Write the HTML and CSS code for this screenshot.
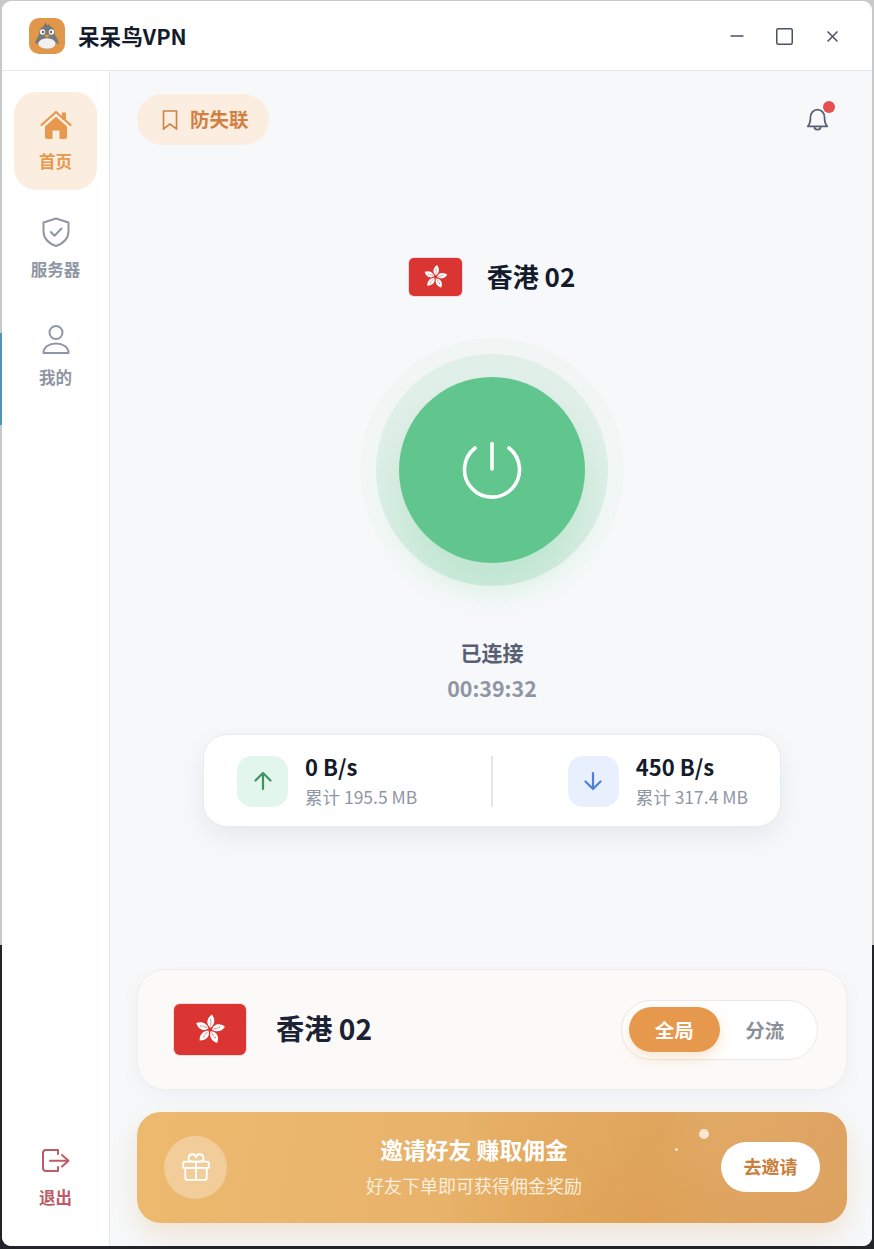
FILE: index.html
```html
<!DOCTYPE html>
<html lang="zh-CN">
    <head>
        <meta charset="UTF-8">
        <meta name="viewport" content="width=device-width, initial-scale=1.0">
        <title>呆呆鸟VPN</title>
        <link rel="stylesheet" href="styles.css">
    </head>
    <body>
        <svg class="defs" width="0" height="0" aria-hidden="true">
            <defs>
                <g id="bauhinia">
                    <g id="petal">
                        <path d="M0.6 -1.5 C-3.4 -4 -3.2 -9.2 1.6 -12.6 C3.6 -9.8 5.2 -5.6 0.6 -1.5 Z" fill="#fff"/>
                        <circle cx="0.5" cy="-8" r="0.55" fill="#da3433"/>
                        <path d="M0.4 -2.8 L0.9 -6.8" stroke="#da3433" stroke-width="0.45" fill="none"/>
                    </g>
                    <use href="#petal" transform="rotate(72)"/>
                    <use href="#petal" transform="rotate(144)"/>
                    <use href="#petal" transform="rotate(216)"/>
                    <use href="#petal" transform="rotate(288)"/>
                </g>
            </defs>
        </svg>

        <div class="window">
            <header class="titlebar">
                <svg class="logo" viewBox="0 0 36 36">
                    <rect width="36" height="36" rx="10" fill="#e0974a"/>
                    <path d="M15 8 L16.500 4.500 L18 7.500 L20.500 6 L20 9 Z" fill="#6d6d70"/>
                    <path d="M18 7.500 C11.500 7.500 10 13 10 17 C7.500 20 6 24 6.500 26 C8 25.500 9 25 9.800 24.200 C11 28.500 14 31 18 31 C22 31 25 28.500 26.200 24.200 C27 25 28 25.500 29.500 26 C30 24 28.500 20 26 17 C26 13 24.500 7.500 18 7.500 Z" fill="#77777c"/>
                    <ellipse cx="18" cy="25.500" rx="8.500" ry="5.300" fill="#f1f1f1"/>
                    <circle cx="13.500" cy="14" r="2.700" fill="#f4f4f4"/>
                    <circle cx="22.500" cy="14" r="2.700" fill="#f4f4f4"/>
                    <circle cx="14" cy="14" r="1" fill="#2c2c30"/>
                    <circle cx="22" cy="14" r="1" fill="#2c2c30"/>
                    <path d="M15 17 Q18 15.800 21 17 L18 19.800 Z" fill="#ef9a3c"/>
                </svg>
                <span class="app-name">呆呆鸟VPN</span>
                <div class="win-controls">
                    <svg class="win-btn" viewBox="0 0 14 16"><path d="M0.500 8 H13.500"/></svg>
                    <svg class="win-btn win-max" viewBox="0 0 17 17"><rect x="0.750" y="0.750" width="15.500" height="15.500" rx="1.500"/></svg>
                    <svg class="win-btn win-close" viewBox="0 0 11 11"><path d="M0.500 0.500 L10.500 10.500 M10.500 0.500 L0.500 10.500"/></svg>
                </div>
            </header>

            <div class="body-row">
                <nav class="sidebar">
                    <div class="nav-item active">
                        <svg class="home-icon" viewBox="0 0 32 30">
                            <path d="M1.500 15 L16 2 L30.500 15" fill="none" stroke="#e8984c" stroke-width="2.200" stroke-linecap="round" stroke-linejoin="round"/>
                            <rect x="22" y="2.500" width="4" height="7" fill="#e8984c"/>
                            <path d="M5 16.500 L16 6.800 L27 16.500 V27 A2 2 0 0 1 25 29 H19.500 V20.500 H12.500 V29 H7 A2 2 0 0 1 5 27 Z" fill="#e8984c"/>
                        </svg>
                        <span>首页</span>
                    </div>
                    <div class="nav-item">
                        <svg class="nav-icon" viewBox="0 0 32 32">
                            <path d="M16 2.500 L28.500 6.500 V15 C28.500 22.500 23 27.500 16 30 C9 27.500 3.500 22.500 3.500 15 V6.500 Z"/>
                            <path d="M10.800 16 L14.500 19.700 L21.500 12.500"/>
                        </svg>
                        <span>服务器</span>
                    </div>
                    <div class="nav-item">
                        <svg class="nav-icon" viewBox="0 0 32 32">
                            <circle cx="16" cy="8.500" r="6.500"/>
                            <path d="M3.500 29 C3.500 23 9 19.500 16 19.500 C23 19.500 28.500 23 28.500 29 Z"/>
                        </svg>
                        <span>我的</span>
                    </div>
                    <div class="nav-item logout">
                        <svg class="nav-icon" viewBox="0 0 32 32">
                            <path d="M18 4 H6 A3 3 0 0 0 3 7 V22 A3 3 0 0 0 6 25 H18 M18 4 V8 M18 21 V25"/>
                            <path d="M10 14.700 H28.500 M22 9 L28.500 14.700 L22 20.500"/>
                        </svg>
                        <span>退出</span>
                    </div>
                </nav>

                <main class="main">
                    <div class="top-row">
                        <div class="anti-lost">
                            <svg class="bookmark" viewBox="0 0 16 20"><path d="M1.500 1 H14.500 V19 L8 14 L1.500 19 Z"/></svg>
                            <span>防失联</span>
                        </div>
                        <div class="bell">
                            <svg viewBox="0 0 26 30"><path d="M2 23 C4.500 20.500 5 18 5 13 C5 8 8.500 4 13 4 C17.500 4 21 8 21 13 C21 18 21.500 20.500 24 23 Z"/><path d="M9.500 23.500 C9.500 28 16.500 28 16.500 23.500"/></svg>
                            <i class="bell-dot"></i>
                        </div>
                    </div>

                    <div class="location">
                        <svg class="flag flag-small" viewBox="-26 -19 52 38"><use href="#bauhinia" transform="scale(0.950)"/></svg>
                        <span>香港 02</span>
                    </div>

                    <div class="ring-outer">
                        <div class="ring-inner">
                            <div class="power">
                                <svg viewBox="0 0 60 62"><path d="M13 9 A27.500 27.500 0 1 0 47 9"/><path d="M30 4.500 V30"/></svg>
                            </div>
                        </div>
                    </div>

                    <div class="status">已连接</div>
                    <div class="timer">00:39:32</div>

                    <div class="stats">
                        <div class="stat">
                            <div class="stat-icon up">
                                <svg viewBox="0 0 20 20"><path d="M10 18 V2.500 M2.500 9.500 L10 2 L17.500 9.500"/></svg>
                            </div>
                            <div class="stat-text">
                                <b>0 B/s</b>
                                <span>累计 195.5 MB</span>
                            </div>
                        </div>
                        <div class="stat-divider"></div>
                        <div class="stat stat-right">
                            <div class="stat-icon down">
                                <svg viewBox="0 0 20 20"><path d="M10 2 V17.500 M2.500 10.500 L10 18 L17.500 10.500"/></svg>
                            </div>
                            <div class="stat-text">
                                <b>450 B/s</b>
                                <span>累计 317.4 MB</span>
                            </div>
                        </div>
                    </div>

                    <div class="node-card">
                        <svg class="flag flag-big" viewBox="-36 -25.500 72 51"><use href="#bauhinia" transform="scale(1.200)"/></svg>
                        <span class="node-name">香港 02</span>
                        <div class="mode-switch">
                            <span class="mode on">全局</span>
                            <span class="mode">分流</span>
                        </div>
                    </div>

                    <div class="invite">
                        <div class="gift">
                            <svg viewBox="0 0 28 28"><rect x="2" y="9" width="24" height="6" rx="1.500"/><path d="M4 15 V24 A2 2 0 0 0 6 26 H22 A2 2 0 0 0 24 24 V15 M14 9 V26"/><path d="M14 9 H9.500 A3.500 3.500 0 1 1 14 5 A3.500 3.500 0 1 1 18.500 9 H14"/></svg>
                        </div>
                        <div class="invite-text">
                            <b>邀请好友 赚取佣金</b>
                            <span>好友下单即可获得佣金奖励</span>
                        </div>
                        <i class="spark spark-a"></i>
                        <i class="spark spark-b"></i>
                        <div class="invite-btn">去邀请</div>
                    </div>
                </main>
            </div>
        </div>
    </body>
</html>
```

FILE: styles.css
```css
* {
    box-sizing: border-box;
}

html, body {
    height: 100%;
}

body {
    margin: 0;
    padding: 1px 2px 3px 2px;
    overflow: hidden;
    font-family: "Noto Sans CJK SC", "Noto Sans", sans-serif;
    color: #1a2233;
    background:
        linear-gradient(#4f93bb, #4f93bb) 0 333px / 2px 92px no-repeat,
        linear-gradient(#c9c9c9 945px, #22242a 945px);
}

.defs {
    display: block;
    position: absolute;
}

.window {
    height: 100%;
    display: flex;
    flex-direction: column;
    background: #fff;
    border-radius: 9px;
    overflow: hidden;
}

.titlebar {
    height: 70px;
    flex: none;
    display: flex;
    align-items: center;
    padding: 0 34px 0 27px;
    border-bottom: 1px solid #e8e9eb;
}

.logo {
    width: 36px;
    height: 36px;
}

.app-name {
    margin-left: 13px;
    font-size: 21.600px;
    font-weight: 700;
    color: #141b2b;
}

.win-controls {
    margin-left: auto;
    margin-top: 1px;
    display: flex;
    align-items: center;
}

.win-btn {
    width: 14px;
    height: 16px;
    fill: none;
    stroke: #4b5262;
    stroke-width: 1.500;
}

.win-max {
    width: 17px;
    height: 17px;
    margin-left: 32px;
}

.win-close {
    width: 11px;
    height: 11px;
    margin-left: 34px;
}

.body-row {
    flex: 1;
    display: flex;
    min-height: 0;
}

.sidebar {
    width: 108px;
    flex: none;
    display: flex;
    flex-direction: column;
    gap: 10px;
    padding: 21px 12px 20px 12px;
    border-right: 1px solid #e8e9eb;
    background: #fff;
}

.nav-item {
    height: 98px;
    display: flex;
    flex-direction: column;
    align-items: center;
    padding-top: 18px;
    border-radius: 22px;
    font-size: 16.500px;
    font-weight: 700;
    color: #8f96a3;
}

.nav-item span {
    margin-top: auto;
    margin-bottom: 17px;
    line-height: 24px;
}

.nav-item.active {
    background: #fbeee1;
    color: #e8984c;
}

.home-icon {
    width: 32px;
    height: 30px;
}

.nav-icon {
    width: 32px;
    height: 32px;
    margin-top: -2px;
    fill: none;
    stroke: currentColor;
    stroke-width: 2;
    stroke-linecap: round;
    stroke-linejoin: round;
}

.logout {
    margin-top: auto;
    color: #bd5c68;
}

.logout .nav-icon {
    margin-top: 0;
}

.main {
    flex: 1;
    display: flex;
    flex-direction: column;
    padding: 23px 25px 23px 27px;
    background: #f6f8fa;
}

.top-row {
    display: flex;
    justify-content: space-between;
    align-items: center;
    flex: none;
}

.anti-lost {
    width: 132px;
    height: 51px;
    display: flex;
    align-items: center;
    gap: 12px;
    padding-left: 25px;
    border-radius: 26px;
    background: #fbeee1;
    font-size: 19.500px;
    font-weight: 700;
    color: #d08142;
}

.anti-lost span {
    margin-bottom: 2px;
}

.bookmark {
    width: 16px;
    height: 20px;
    fill: none;
    stroke: #d08142;
    stroke-width: 1.600;
}

.bell {
    position: relative;
    width: 23px;
    height: 26.500px;
    margin-right: 18.500px;
}

.bell svg {
    display: block;
    width: 23px;
    height: 26.500px;
    fill: none;
    stroke: #586071;
    stroke-width: 2;
    stroke-linejoin: round;
}

.bell-dot {
    position: absolute;
    top: -5px;
    right: -6.500px;
    width: 12px;
    height: 12px;
    border-radius: 50%;
    background: #e64f4f;
}

.location {
    flex: none;
    margin-top: 113px;
    display: flex;
    align-items: center;
    justify-content: center;
    gap: 25px;
    height: 38px;
    font-size: 26px;
    font-weight: 700;
    color: #141b2b;
}

.location span {
    margin-bottom: 4px;
}

.flag {
    display: block;
    flex: none;
    background: #da3433;
}

.flag-small {
    width: 53px;
    height: 38px;
    border-radius: 5px;
    box-shadow: 0 0 0 1px #f6d9d8;
}

.flag-big {
    width: 72px;
    height: 51px;
    border-radius: 6px;
    box-shadow: 0 0 0 1px #f6d9d8;
}

.ring-outer {
    flex: none;
    align-self: center;
    width: 264px;
    height: 264px;
    margin-top: 42px;
    display: flex;
    align-items: center;
    justify-content: center;
    border-radius: 50%;
    background: linear-gradient(#f1f6f5, #f3f8f6);
}

.ring-inner {
    width: 232px;
    height: 232px;
    display: flex;
    align-items: center;
    justify-content: center;
    border-radius: 50%;
    background: linear-gradient(#e1efe9 20%, #dcefe5 70%, #d3ecdf);
}

.power {
    width: 186px;
    height: 186px;
    display: flex;
    align-items: center;
    justify-content: center;
    border-radius: 50%;
    background: #60c68d;
    box-shadow: 0 22px 34px rgba(96, 198, 141, 0.2);
}

.power svg {
    width: 60px;
    height: 62px;
    fill: none;
    stroke: #fff;
    stroke-width: 3.600;
    stroke-linecap: round;
}

.status {
    flex: none;
    margin-top: 36px;
    text-align: center;
    font-size: 21px;
    line-height: 28px;
    font-weight: 700;
    color: #576072;
}

.timer {
    flex: none;
    margin-top: 8px;
    text-align: center;
    font-size: 21.400px;
    line-height: 28px;
    font-weight: 700;
    color: #8f96a3;
}

.stats {
    flex: none;
    align-self: center;
    width: 578px;
    height: 93px;
    margin-top: 32px;
    display: grid;
    grid-template-columns: 254px 2px 1fr;
    align-items: center;
    padding: 1px 32px 0 33px;
    background: #fff;
    border: 1px solid #e9ebee;
    border-radius: 24px;
    box-shadow: 0 10px 26px rgba(30, 40, 60, 0.07);
}

.stat {
    display: flex;
    gap: 17px;
}

.stat-right {
    justify-content: flex-end;
}

.stat-divider {
    width: 2px;
    height: 51px;
    background: #e4e6e8;
}

.stat-icon {
    width: 51px;
    height: 51px;
    display: flex;
    align-items: center;
    justify-content: center;
    border-radius: 15px;
}

.stat-icon svg {
    width: 20px;
    height: 20px;
    fill: none;
    stroke-width: 2.200;
    stroke-linecap: round;
    stroke-linejoin: round;
}

.up {
    background: #e3f6eb;
}

.up svg {
    stroke: #3f9363;
}

.down {
    background: #e8f0fd;
}

.down svg {
    stroke: #4f7fdc;
}

.stat-text {
    height: 51px;
    display: flex;
    flex-direction: column;
    justify-content: space-between;
}

.stat-text b {
    margin-top: -1px;
    font-size: 22px;
    line-height: 22px;
    color: #141b2b;
}

.stat-text span {
    font-size: 17.500px;
    line-height: 20px;
    color: #8f96a3;
}

.node-card {
    flex: none;
    margin-top: auto;
    height: 121px;
    display: flex;
    align-items: center;
    padding: 0 28px 0 36px;
    background: #fcfaf8;
    border: 1px solid #ededec;
    border-radius: 28px;
    box-shadow: 0 6px 20px rgba(30, 40, 60, 0.04);
}

.node-name {
    margin-left: 30px;
    margin-bottom: 4px;
    font-size: 28.200px;
    font-weight: 700;
    color: #1a2233;
}

.mode-switch {
    margin-left: auto;
    width: 197px;
    height: 60px;
    display: flex;
    align-items: center;
    padding: 0 7px;
    background: #fff;
    border: 1px solid #e9e9e9;
    border-radius: 30px;
}

.mode {
    width: 91px;
    height: 45px;
    display: flex;
    align-items: center;
    justify-content: center;
    border-radius: 23px;
    font-size: 19.500px;
    font-weight: 700;
    color: #8a8f9b;
}

.mode.on {
    background: #e6984c;
    color: #fff;
    box-shadow: 0 6px 14px rgba(230, 152, 76, 0.25);
}

.invite {
    position: relative;
    flex: none;
    height: 111px;
    margin-top: 22px;
    display: flex;
    align-items: center;
    padding: 0 27px;
    border-radius: 24px;
    background:
        radial-gradient(circle at 82% 0, rgba(255, 255, 255, 0.12), rgba(255, 255, 255, 0) 35%),
        linear-gradient(100deg, #edb96f, #e8b26a 45%, #dd9d4e 72%, #dd9f5c);
    box-shadow: 0 12px 26px rgba(221, 157, 78, 0.22);
    color: #fff;
}

.gift {
    width: 63px;
    height: 63px;
    flex: none;
    display: flex;
    align-items: center;
    justify-content: center;
    border-radius: 50%;
    background: rgba(255, 255, 255, 0.3);
}

.gift svg {
    width: 30px;
    height: 30px;
    margin-bottom: 2px;
    fill: none;
    stroke: #fff;
    stroke-width: 1.800;
    stroke-linejoin: round;
}

.invite-text {
    flex: 1;
    display: flex;
    flex-direction: column;
    align-items: center;
    gap: 8px;
    padding-bottom: 3px;
}

.invite-text b {
    font-size: 22.800px;
    line-height: 30px;
}

.invite-text span {
    font-size: 18px;
    line-height: 24px;
    color: #fbeedd;
}

.invite-btn {
    width: 99px;
    height: 50px;
    flex: none;
    margin-top: -2px;
    padding-bottom: 2px;
    display: flex;
    align-items: center;
    justify-content: center;
    border-radius: 25px;
    background: #fff;
    font-size: 18px;
    font-weight: 700;
    color: #c97e3a;
}

.spark {
    position: absolute;
    border-radius: 50%;
    background: #fbe6cf;
}

.spark-a {
    top: 17px;
    left: 562px;
    width: 10px;
    height: 10px;
}

.spark-b {
    top: 36px;
    left: 538px;
    width: 3px;
    height: 3px;
}
```
